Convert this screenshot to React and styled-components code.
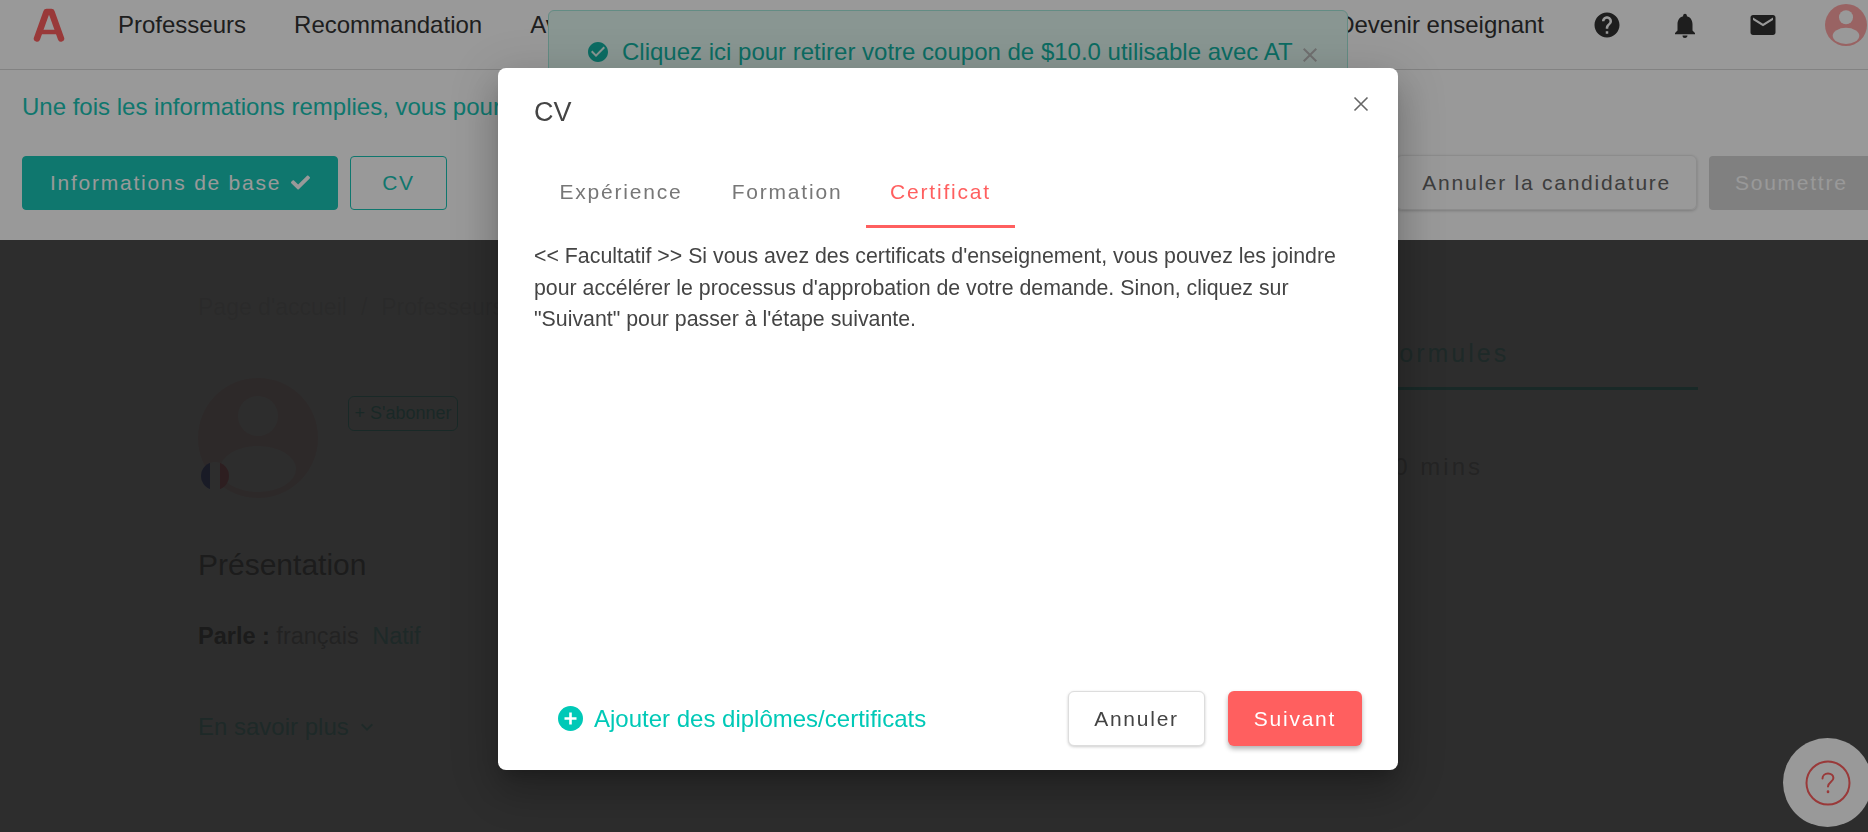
import React from 'react';
import styled, { createGlobalStyle } from 'styled-components';
import { MdHelp, MdNotifications, MdEmail, MdCheckCircle, MdClose, MdExpandMore } from 'react-icons/md';
import { FaCheck } from 'react-icons/fa';

const GlobalStyle = createGlobalStyle`
  html, body {
    margin: 0;
    height: 100%;
    overflow: hidden;
    font-family: "Liberation Sans", Arial, sans-serif;
    background: #fff;
  }
  * { box-sizing: border-box; }
`;

const teal = '#1ac6b7';
const coral = '#ff5f5f';

const Page = styled.div`
  width: 1868px;
  height: 832px;
  display: flex;
  flex-direction: column;
  overflow: hidden;
`;

const Header = styled.header`
  height: 70px;
  flex: none;
  display: flex;
  align-items: center;
  padding: 0 1px 19px 33px;
  background: #fff;
  border-bottom: 1px solid #d9d9d9;
`;

const Logo = styled.svg`
  width: 32px;
  height: 34px;
  margin: 0 53px 0 0;
  flex: none;
`;

const NavLink = styled.a`
  font-size: 24px;
  color: #333;
  margin-right: 48px;
  white-space: nowrap;
`;

const HeaderRight = styled.div`
  margin-left: auto;
  display: flex;
  align-items: center;
  color: #333;
`;

const TopIcon = styled.span`
  width: 30px;
  height: 30px;
  margin-left: 48px;
  display: flex;
  align-items: center;
  justify-content: center;
  font-size: ${p => p.$size || 30}px;
  line-height: 0;
`;

const AvatarSlot = styled.span`
  width: 42px;
  height: 42px;
  margin-left: 47px;
  display: block;
`;

const ActionBar = styled.div`
  height: 170px;
  flex: none;
  background: #fff;
  padding: 23px 0 0 22px;
  display: flex;
  flex-direction: column;
`;

const Hint = styled.p`
  margin: 0;
  font-size: 24px;
  line-height: 28px;
  color: ${teal};
  white-space: nowrap;
`;

const ActionRow = styled.div`
  margin-top: 34px;
  display: flex;
  align-items: center;
`;

const StepButton = styled.button`
  height: 54px;
  padding: 0 ${p => p.$pad || 27}px;
  border-radius: 4px;
  font-family: inherit;
  font-size: 21px;
  letter-spacing: 1.75px;
  display: flex;
  align-items: center;
  gap: 10px;
  margin-right: 12px;
  border: 1px solid ${teal};
  background: ${p => (p.$filled ? teal : 'transparent')};
  color: ${p => (p.$filled ? '#fff' : teal)};
  white-space: nowrap;

  svg { font-size: 19px; color: #fff; }
`;

const CancelApply = styled.button`
  height: 55px;
  margin-left: auto;
  margin-right: 12px;
  padding: 0 25px;
  font-family: inherit;
  font-size: 21px;
  letter-spacing: 1.75px;
  color: #666;
  background: transparent;
  border: 1px solid #eaeaea;
  border-radius: 6px;
  box-shadow: 0 1px 3px rgba(0, 0, 0, 0.2);
  white-space: nowrap;
`;

const SubmitApply = styled.button`
  height: 54px;
  width: 159px;
  padding: 0 0 0 26px;
  text-align: left;
  font-family: inherit;
  font-size: 21px;
  letter-spacing: 1.75px;
  color: #fff;
  background: #d6d6d6;
  border: 0;
  border-radius: 4px 0 0 4px;
  white-space: nowrap;
`;

const Content = styled.main`
  position: relative;
  flex: 1;
  background: #fff;
  padding: 52px 170px 0 198px;
  display: grid;
  grid-template-columns: 1fr 500px;
  column-gap: 60px;
`;

const Dim = styled.div`
  position: absolute;
  inset: 0;
  background: rgba(0, 0, 0, 0.7);
`;

const Crumbs = styled.div`
  font-size: 23px;
  line-height: 30px;
  color: #efefef;
  white-space: nowrap;
`;

const CrumbSlash = styled.span`
  margin: 0 14px;
`;

const ProfileRow = styled.div`
  margin-top: 56px;
  display: flex;
  align-items: flex-start;
  gap: 30px;
`;

const AvatarWrap = styled.div`
  position: relative;
  width: 120px;
  height: 120px;
`;

const Flag = styled.div`
  position: absolute;
  left: 3px;
  top: 84px;
  width: 28px;
  height: 28px;
  border-radius: 50%;
  overflow: hidden;
  display: flex;
`;

const FlagBand = styled.span`
  flex: 1;
  background: ${p => p.$c};
`;

const Subscribe = styled.button`
  margin-top: 18px;
  width: 110px;
  height: 35px;
  padding: 0;
  font-family: inherit;
  font-size: 18px;
  color: #8fe4d8;
  background: transparent;
  border: 1px solid #8ce8dc;
  border-radius: 6px;
  white-space: nowrap;
`;

const Heading = styled.h2`
  margin: 49px 0 0;
  font-size: 30px;
  line-height: 36px;
  font-weight: 400;
  color: #a0a0a0;
`;

const Speaks = styled.p`
  margin: 39px 0 0;
  font-size: 23.5px;
  line-height: 28px;
  color: #c4c4c4;
  b { color: #999; }
`;

const Native = styled.span`
  color: #a8e8e0;
  margin-left: 7px;
`;

const More = styled.div`
  margin-top: 63px;
  font-size: 24px;
  line-height: 28px;
  color: #a8e8e0;
  display: flex;
  align-items: center;
  gap: 6px;
`;

const Plans = styled.div`
  padding-top: 10px;
`;

const PlanTab = styled.div`
  height: 88px;
  padding: 37px 0 0 183px;
  font-size: 25px;
  letter-spacing: 3px;
  color: #a8e8e0;
  border-bottom: 3px solid #8ce8dc;
  white-space: nowrap;
`;

const Duration = styled.div`
  margin-top: 63px;
  padding-left: 180px;
  font-size: 24px;
  letter-spacing: 3px;
  white-space: nowrap;
  color: #ccc;
`;

const Coupon = styled.div`
  position: absolute;
  left: 548px;
  top: 10px;
  width: 800px;
  height: 100px;
  padding: 27px 0 0 37px;
  display: flex;
  align-items: flex-start;
  background: #e4fbf4;
  border: 1px solid #a6e9dc;
  border-radius: 6px;
  color: #14b5a5;
  font-size: 24px;
  line-height: 28px;
  white-space: nowrap;

  > svg { font-size: 24px; margin: 2px 12px 0 0; flex: none; }
`;

const CouponClose = styled.span`
  display: flex;
  color: #bbb;
  font-size: 24px;
  margin: 5px 0 0 5px;
`;

const HelpBubble = styled.div`
  position: absolute;
  left: 1783px;
  top: 738px;
  width: 89px;
  height: 89px;
  border-radius: 50%;
  background: #fff;
  display: flex;
  align-items: center;
  justify-content: center;
`;

const Backdrop = styled.div`
  position: fixed;
  inset: 0;
  background: rgba(0, 0, 0, 0.4);
`;

const Modal = styled.section`
  position: fixed;
  left: 498px;
  top: 68px;
  width: 900px;
  height: 702px;
  padding: 0 36px;
  display: flex;
  flex-direction: column;
  background: #fff;
  border-radius: 8px;
  box-shadow: 0 11px 15px -7px rgba(0, 0, 0, 0.2), 0 24px 38px 3px rgba(0, 0, 0, 0.14), 0 9px 46px 8px rgba(0, 0, 0, 0.12);
`;

const ModalHead = styled.div`
  height: 88px;
  display: flex;
  justify-content: space-between;
  align-items: flex-start;
  padding-top: 29px;
`;

const ModalTitle = styled.h1`
  margin: 0;
  font-size: 27px;
  line-height: 30px;
  font-weight: 400;
  color: #444;
`;

const ModalClose = styled.button`
  width: 16px;
  height: 16px;
  margin: -1px -7px 0 0;
  padding: 0;
  border: 0;
  background: none;
  color: #666;
  line-height: 0;
`;

const Tabs = styled.div`
  display: flex;
  height: 72px;
`;

const Tab = styled.div`
  width: ${p => p.$w}px;
  text-align: center;
  padding-top: 24px;
  font-size: 21px;
  line-height: 24px;
  letter-spacing: 1.8px;
  color: ${p => (p.$active ? coral : '#777')};
  border-bottom: 3px solid ${p => (p.$active ? coral : 'transparent')};
`;

const ModalText = styled.p`
  margin: 13px 0 0;
  font-size: 21.33px;
  line-height: 31.5px;
  color: #444;
  flex: 1;
`;

const ModalFoot = styled.div`
  height: 79px;
  margin-bottom: 12px;
  padding: 0 0 0 24px;
  display: flex;
  align-items: center;
`;

const AddLink = styled.a`
  display: flex;
  align-items: center;
  gap: 11px;
  font-size: 24px;
  color: #00c9b7;
  margin-right: auto;
  white-space: nowrap;
`;

const FootButton = styled.button`
  height: 55px;
  width: ${p => p.$w}px;
  margin-left: 23px;
  padding: 0;
  font-family: inherit;
  font-size: 21px;
  letter-spacing: 1.75px;
  border-radius: 6px;
  background: ${p => (p.$primary ? coral : '#fff')};
  color: ${p => (p.$primary ? '#fff' : '#444')};
  border: ${p => (p.$primary ? '0' : '1px solid #ddd')};
  box-shadow: ${p => (p.$primary ? '0 3px 5px rgba(0, 0, 0, 0.3)' : '0 1px 3px rgba(0, 0, 0, 0.2)')};
`;

function UserAvatar({ size, circle, person }) {
  return (
    <svg width={size} height={size} viewBox="0 0 120 120" style={{ display: 'block' }}>
      <circle cx="60" cy="60" r="60" fill={circle} />
      <circle cx="60" cy="38" r="20" fill={person} />
      <ellipse cx="60" cy="91" rx="38" ry="23" fill={person} />
    </svg>
  );
}

export default function App() {
  return (
    <>
      <GlobalStyle />
      <Page>
        <Header>
          <Logo viewBox="0 0 32 34">
            <g fill="none" stroke={coral} strokeLinecap="round" strokeLinejoin="round">
              <path d="M4 30.5 L13.5 4 H18.5 L28 30.5" strokeWidth="6.5" />
              <path d="M9 24 H23" strokeWidth="4.5" />
            </g>
          </Logo>
          <NavLink>Professeurs</NavLink>
          <NavLink>Recommandation</NavLink>
          <NavLink>Avantages</NavLink>
          <HeaderRight>
            <NavLink as="span" style={{ marginRight: 0 }}>Devenir enseignant</NavLink>
            <TopIcon><MdHelp /></TopIcon>
            <TopIcon $size={33}><MdNotifications /></TopIcon>
            <TopIcon><MdEmail /></TopIcon>
            <AvatarSlot>
              <UserAvatar size={42} circle="#ffa6a6" person="#ffffff" />
            </AvatarSlot>
          </HeaderRight>
        </Header>
        <ActionBar>
          <Hint>Une fois les informations remplies, vous pourrez soumettre votre candidature.</Hint>
          <ActionRow>
            <StepButton $filled>Informations de base <FaCheck /></StepButton>
            <StepButton $pad={31}>CV</StepButton>
            <CancelApply>Annuler la candidature</CancelApply>
            <SubmitApply>Soumettre</SubmitApply>
          </ActionRow>
        </ActionBar>
        <Content>
          <div>
            <Crumbs>Page d'accueil<CrumbSlash>/</CrumbSlash>Professeurs de français</Crumbs>
            <ProfileRow>
              <AvatarWrap>
                <UserAvatar size={120} circle="#ffe6e6" person="#ffffff" />
                <Flag>
                  <FlagBand $c="#8f9cd8" />
                  <FlagBand $c="#ffffff" />
                  <FlagBand $c="#ffa9b4" />
                </Flag>
              </AvatarWrap>
              <Subscribe>+ S'abonner</Subscribe>
            </ProfileRow>
            <Heading>Présentation</Heading>
            <Speaks><b>Parle :</b> français <Native>Natif</Native></Speaks>
            <More>En savoir plus <MdExpandMore /></More>
          </div>
          <Plans>
            <PlanTab>Formules</PlanTab>
            <Duration>30 mins</Duration>
          </Plans>
          <Dim />
        </Content>
      </Page>
      <Coupon>
        <MdCheckCircle />
        Cliquez ici pour retirer votre coupon de $10.0 utilisable avec AT
        <CouponClose><MdClose /></CouponClose>
      </Coupon>
      <HelpBubble>
        <svg width="46" height="46" viewBox="0 0 46 46" fill="none" stroke={coral} strokeWidth="2" strokeLinecap="round">
          <circle cx="23" cy="23" r="21.5" />
          <path d="M17.5 18.5c0-3 2.4-5 5.5-5s5.4 1.9 5.4 4.6c0 3.9-5.4 4-5.4 8.4" />
          <path d="M23 31.6v.4" strokeWidth="2.6" />
        </svg>
      </HelpBubble>
      <Backdrop />
      <Modal role="dialog">
        <ModalHead>
          <ModalTitle>CV</ModalTitle>
          <ModalClose aria-label="Fermer">
            <svg width="16" height="16" viewBox="0 0 16 16" stroke="currentColor" strokeWidth="1.6">
              <path d="M1.5 1.5l13 13M14.5 1.5l-13 13" />
            </svg>
          </ModalClose>
        </ModalHead>
        <Tabs>
          <Tab $w={174}>Expérience</Tab>
          <Tab $w={158}>Formation</Tab>
          <Tab $w={149} $active>Certificat</Tab>
        </Tabs>
        <ModalText>
          &lt;&lt; Facultatif &gt;&gt; Si vous avez des certificats d'enseignement, vous pouvez les joindre
          pour accélérer le processus d'approbation de votre demande. Sinon, cliquez sur
          "Suivant" pour passer à l'étape suivante.
        </ModalText>
        <ModalFoot>
          <AddLink>
            <svg width="25" height="25" viewBox="0 0 25 25">
              <circle cx="12.5" cy="12.5" r="12.5" fill="#00c9b7" />
              <path d="M12.5 6.5v12M6.5 12.5h12" stroke="#fff" strokeWidth="2.6" />
            </svg>
            Ajouter des diplômes/certificats
          </AddLink>
          <FootButton $w={137}>Annuler</FootButton>
          <FootButton $w={134} $primary>Suivant</FootButton>
        </ModalFoot>
      </Modal>
    </>
  );
}
